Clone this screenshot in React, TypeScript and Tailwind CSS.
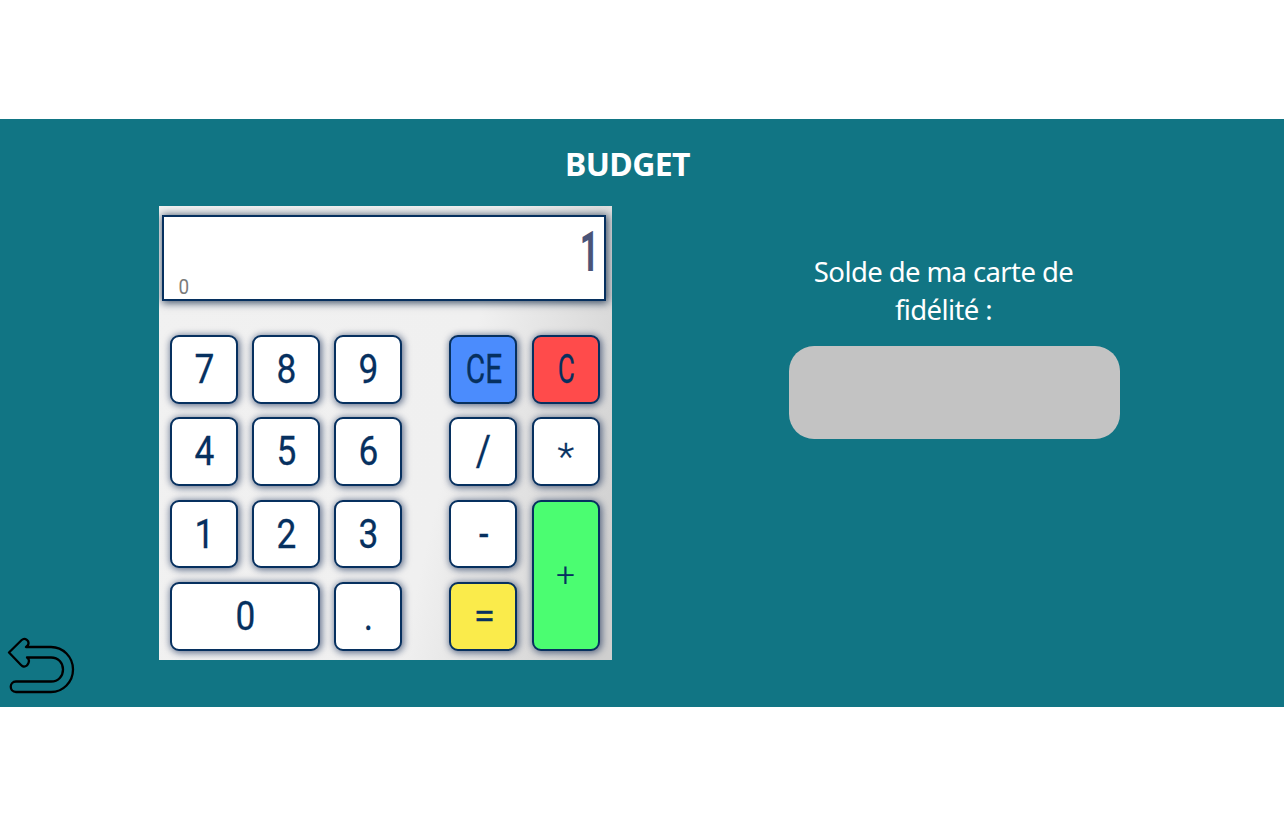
type KeyProps = { label: string; className?: string; glyph?: string };

function Key({ label, className = "bg-white", glyph = "scale-x-[0.86]" }: KeyProps) {
  return (
    <button
      className={`flex items-center justify-center rounded-[9px] border-2 border-[#06305f] pl-px text-[41px] leading-none text-[#06305f] shadow-[1px_1px_7px_1px_rgba(6,30,75,0.6)] ${className}`}
    >
      <span className={`inline-block [-webkit-text-stroke:0.3px_#06305f] ${glyph}`}>{label}</span>
    </button>
  );
}

function Calculator() {
  return (
    <section className="h-[454px] w-[453px] shrink-0 overflow-hidden bg-[linear-gradient(103deg,#f1f1f1_0%,#f0f0f0_62%,#cfcfcf_97%)] pt-[9px] font-[Roboto,sans-serif]">
      <div className="ml-[3px] flex h-[86px] w-[444px] flex-col border-2 border-[#06305f] bg-white shadow-[1px_1px_8px_1px_rgba(6,30,60,0.75)]">
        <div className="flex justify-end pt-[6px] pr-[5px] text-[56px] leading-[58px] text-[#4a5478]">
          <span className="inline-block origin-right scale-x-[0.6] font-bold">1</span>
        </div>
        <div className="-mt-1 pl-[14px] text-[21px] leading-[20px] text-[#7b7b7b]">
          <span className="inline-block scale-x-[0.9]">0</span>
        </div>
      </div>
      <div className="mt-[34px] ml-[11px] flex gap-[47px]">
        <div className="grid grid-cols-[repeat(3,68px)] grid-rows-[repeat(4,68.5px)] gap-x-[14.2px] gap-y-[13.9px]">
          <Key label="7" />
          <Key label="8" />
          <Key label="9" />
          <Key label="4" />
          <Key label="5" />
          <Key label="6" />
          <Key label="1" />
          <Key label="2" />
          <Key label="3" />
          <Key label="0" className="col-span-2 bg-white" />
          <Key label="." />
        </div>
        <div className="grid grid-cols-[repeat(2,68px)] grid-rows-[repeat(4,68.5px)] gap-x-[14.2px] gap-y-[13.9px]">
          <Key label="CE" className="bg-[#4b8cfd]" glyph="scale-x-[0.73]" />
          <Key label="C" className="bg-[#ff4b4b]" glyph="scale-x-[0.64]" />
          <Key label="/" glyph="scale-x-[0.9] scale-y-[1.02]" />
          <Key label="*" glyph="scale-x-[0.95] scale-y-[0.9] font-light translate-y-[5px]" />
          <Key label="-" glyph="scale-x-[0.84]" />
          <Key label="+" className="row-span-2 bg-[#4bfd71]" glyph="scale-[0.8] font-light" />
          <Key label="=" className="bg-[#faeb4b]" glyph="scale-x-[0.94] scale-y-[0.86]" />
        </div>
      </div>
    </section>
  );
}

function BackIcon() {
  return (
    <svg width="68" height="58" viewBox="0 0 68 58" fill="none" stroke="#000" strokeWidth="2.3" strokeLinejoin="round">
      <path d="M2 15.5 14.7 3C18 0 23 4 21 8L19 10H44C56 10 66 20 66 32.500S56 55 44 55H9C2 55 2 44.500 9 44.500H44C51.500 44.500 56 39 56 32.500S51.500 20.500 44 20.500H20C24 23 21 30 16.500 29.500C15.500 29.500 14.500 28.500 14 28Z" />
    </svg>
  );
}

export default function App() {
  return (
    <div className="h-[827px] w-[1284px] bg-white pt-[119px]">
      <main className="flex h-[588px] bg-[#117584] font-['Noto_Sans',sans-serif] text-white">
        <button aria-label="Retour" className="mb-[12px] ml-[7px] self-end">
          <BackIcon />
        </button>
        <div className="ml-[84px] flex w-[961px] flex-col pt-[27px]">
          <h1 className="pr-[24px] text-center text-[32px] leading-[36px] font-bold tracking-[-0.6px]">
            BUDGET
          </h1>
          <div className="mt-[24px] flex">
            <Calculator />
            <aside className="ml-[177px] w-[331px] shrink-0 pt-[47px]">
              <p className="pr-[22px] text-center text-[27.5px] leading-[38px] tracking-[-0.6px]">
                Solde de ma carte de
                <br />
                fidélité :
              </p>
              <div className="mt-[17px] h-[93px] rounded-[25px] bg-[#c3c3c3]" />
            </aside>
          </div>
        </div>
      </main>
    </div>
  );
}
